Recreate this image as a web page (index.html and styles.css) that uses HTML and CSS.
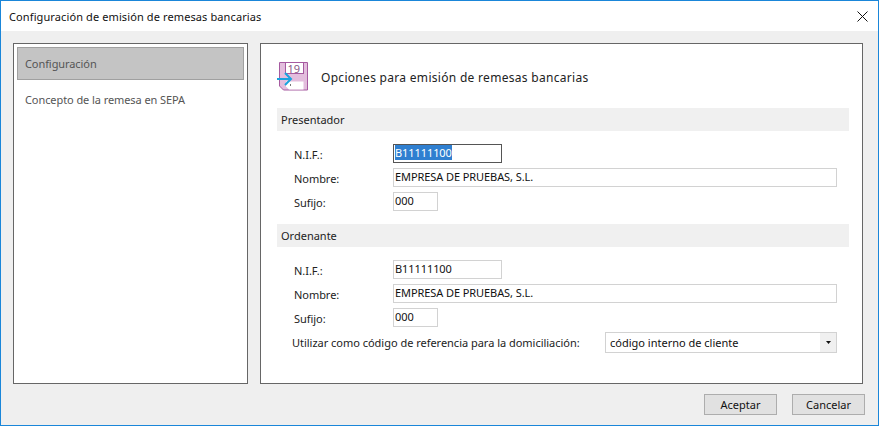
FILE: index.html
```html
<!DOCTYPE html>
<html lang="es">
<head>
<meta charset="utf-8">
<title>Configuración de emisión de remesas bancarias</title>
<link rel="stylesheet" href="styles.css">
</head>
<body>
<div class="window">
  <header class="titlebar">
    <span class="title">Configuración de emisión de remesas bancarias</span>
    <svg class="close" width="11" height="11" viewBox="0 0 11 11"><path d="M.5.5l10 10M10.500.5l-10 10" stroke="#111" fill="none"/></svg>
  </header>
  <div class="main">
    <nav class="sidebar">
      <div class="navitem active">Configuración</div>
      <div class="navitem">Concepto de la remesa en SEPA</div>
    </nav>
    <section class="panel">
      <div class="panelhead">
        <svg class="logo" width="32" height="34" viewBox="0 -2 32 34">
          <path d="M2.500.500h28v27.500h-24l-4-4z" fill="#e3bddd" stroke="#a65aa0"/>
          <rect x="8.500" y=".5" width="18" height="11" fill="#fff" stroke="#a65aa0"/>
          <path d="M9 19.500h17.500v8H12l-3-3z" fill="#fff"/>
          <path d="M13.500 22v2" stroke="#777"/>
          <text x="10.500" y="10.500" class="logotext">19</text>
          <path d="M0 17h14M8 11l6 6-6 6" stroke="#19a3de" stroke-width="2" fill="none"/>
        </svg>
        <h1 class="paneltitle">Opciones para emisión de remesas bancarias</h1>
      </div>
      <h2 class="group">Presentador</h2>
      <div class="fields">
        <label class="lbl">N.I.F.:</label><div class="input nif focus"><span class="sel">B11111100</span></div>
        <label class="lbl">Nombre:</label><div class="input wide">EMPRESA DE PRUEBAS, S.L.</div>
        <label class="lbl">Sufijo:</label><div class="input suf">000</div>
      </div>
      <h2 class="group">Ordenante</h2>
      <div class="fields">
        <label class="lbl">N.I.F.:</label><div class="input nif">B11111100</div>
        <label class="lbl">Nombre:</label><div class="input wide">EMPRESA DE PRUEBAS, S.L.</div>
        <label class="lbl">Sufijo:</label><div class="input suf">000</div>
      </div>
      <div class="refrow">
        <label class="reflbl">Utilizar como código de referencia para la domiciliación:</label>
        <div class="select"><span class="seltext">código interno de cliente</span><span class="arrow"><svg width="5" height="3" viewBox="0 0 5 3"><path d="M0 0h5L2.500 3z" fill="#111"/></svg></span></div>
      </div>
    </section>
  </div>
  <footer class="footer">
    <button class="btn">Aceptar</button>
    <button class="btn">Cancelar</button>
  </footer>
</div>
</body>
</html>
```
FILE: styles.css
```css
* { box-sizing: border-box; }
html, body { margin: 0; padding: 0; }
body { width: 879px; height: 426px; overflow: hidden; font-family: "Noto Sans", "Open Sans", sans-serif; font-size: 11px; color: #1a1a1a; }
.window { width: 879px; height: 426px; display: flex; flex-direction: column; background: #efefef; border: 1px solid #1a86d9; }
.titlebar { height: 30px; flex: none; background: #fff; display: flex; align-items: center; justify-content: space-between; padding: 0 10px 0 8px; }
.title { font-size: 11px; color: #111; letter-spacing: .11px; }
.close { display: block; }
.main { flex: none; height: 341px; margin-top: 12px; padding: 0 15px 0 12px; display: flex; gap: 12px; }
.sidebar { width: 235px; background: #fff; border: 1px solid #666; padding: 3px; display: flex; flex-direction: column; }
.navitem { height: 34px; flex: none; display: flex; align-items: center; padding: 0 0 2px 8px; color: #555; letter-spacing: -.08px; margin-bottom: 3px; }
.navitem.active { height: 33px; background: #c4c4c4; border: 1px solid #a0a0a0; padding: 0 0 1px 7px; }
.panel { width: 603px; background: #fff; border: 1px solid #666; padding: 0 13px 0 16px; display: flex; flex-direction: column; }
.panelhead { height: 64px; display: flex; align-items: center; padding-top: 2px; }
.logo { flex: none; display: block; margin: 0 12px 0 0; }
.logotext { font-size: 11px; fill: #8a5a88; font-family: "Noto Sans", sans-serif; }
.paneltitle { margin: 0; font-weight: 400; font-size: 12px; color: #222; letter-spacing: .3px; }
.group { margin: 0; height: 23px; background: #f0f0f0; font-weight: 400; font-size: 11px; color: #222; display: flex; align-items: center; padding-left: 4px; flex: none; }
.fields { margin: 13px 0; padding: 0 12px 0 17px; display: grid; grid-template-columns: 99px 1fr; row-gap: 5px; align-items: center; }
.lbl { color: #222; padding-top: 2px; letter-spacing: -.05px; }
.input { height: 19px; border: 1px solid #d2d2d2; background: #fff; line-height: 15px; padding-left: 1px; color: #111; letter-spacing: -.08px; }
.input.nif { width: 109px; }
.input.wide { width: 444px; }
.input.suf { width: 45px; }
.input.focus { border-color: #555; }
.sel { background: #2f7fd0; color: #fff; display: inline-block; height: 15px; }
.refrow { display: flex; align-items: center; padding-left: 15px; margin-top: -8px; }
.reflbl { width: 313px; flex: none; color: #222; letter-spacing: -.02px; }
.select { width: 232px; height: 21px; border: 1px solid #d2d2d2; background: #fff; display: flex; justify-content: space-between; align-items: center; }
.seltext { padding-left: 4px; color: #111; }
.arrow { width: 16px; height: 19px; background: #f0f0f0; display: flex; align-items: center; justify-content: center; }
.footer { flex: 1; display: flex; justify-content: flex-end; align-items: flex-start; gap: 15px; padding: 10px 13px 0 0; }
.btn { width: 73px; height: 21px; background: #e1e1e1; border: 1px solid #adadad; font: inherit; color: #111; padding: 0; }
```
